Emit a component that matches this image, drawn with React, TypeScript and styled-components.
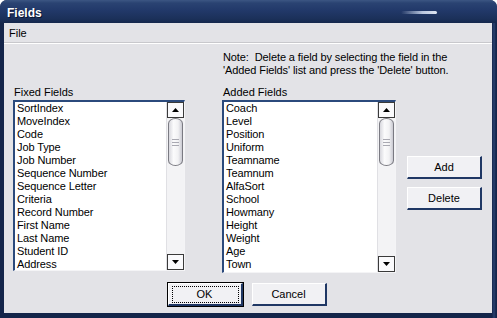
import React from 'react'
import styled, { createGlobalStyle } from 'styled-components'

const GlobalStyle = createGlobalStyle`
    html, body {
        margin: 0;
        padding: 0;
        background: #ffffff;
    }
    body {
        font-family: "Liberation Sans", Arial, sans-serif;
        font-size: 11px;
        color: #000000;
    }
`

const fixedFields = [
    'SortIndex', 'MoveIndex', 'Code', 'Job Type', 'Job Number', 'Sequence Number',
    'Sequence Letter', 'Criteria', 'Record Number', 'First Name', 'Last Name',
    'Student ID', 'Address',
]

const addedFields = [
    'Coach', 'Level', 'Position', 'Uniform', 'Teamname', 'Teamnum', 'AlfaSort',
    'School', 'Howmany', 'Height', 'Weight', 'Age', 'Town',
]

const Window = styled.div`
    width: 497px;
    height: 318px;
    display: flex;
    flex-direction: column;
    background: linear-gradient(90deg, #14254a 0, #14254a 492px, #2a4170 494px, #14254a 496px);
    border-radius: 7px 7px 0 0;
    overflow: hidden;
    box-sizing: border-box;
`

const TitleBar = styled.div`
    position: relative;
    height: 23px;
    flex: none;
    display: flex;
    align-items: center;
    padding: 2px 0 0 7px;
    box-sizing: border-box;
    background: linear-gradient(#3c5683 0px, #2a4372 3px, #22396a 10px, #1b3059 19px, #15274c 23px);
    color: #ffffff;
    font-weight: bold;
    font-size: 12px;
    text-shadow: 1px 1px 0 #0a1530;
`

const Gloss = styled.div`
    position: absolute;
    right: 60px;
    top: 11px;
    width: 36px;
    height: 3px;
    border-radius: 2px;
    background: linear-gradient(90deg, rgba(140, 160, 200, 0) 0%, #b9c6de 60%, #dfe6f2 100%);
`

const Body = styled.div`
    flex: 1;
    margin: 0 5px 5px 4px;
    background: #e3e3e7;
    display: flex;
    flex-direction: column;
`

const MenuBar = styled.div`
    height: 19px;
    flex: none;
    display: flex;
    align-items: center;
    padding-left: 5px;
    border-bottom: 1px solid #c8c8cc;
    box-shadow: 0 1px 0 #ffffff;
`

const Content = styled.div`
    display: grid;
    grid-template-columns: 172px 37px 174px 11px 75px;
    grid-template-rows: auto auto auto;
    padding: 8px 0 0 9px;
`

const Note = styled.div`
    grid-column: 3 / 6;
    grid-row: 1;
    margin-left: 1px;
    line-height: 13px;
    height: 35px;
    white-space: nowrap;
    letter-spacing: -0.1px;
`

const Label = styled.div<{ $col: number }>`
    grid-column: ${p => p.$col};
    grid-row: 2;
    margin-left: 1px;
    line-height: 13px;
    height: 14px;
`

const ListBox = styled.div<{ $col: number; $height: number }>`
    grid-column: ${p => p.$col};
    grid-row: 3;
    align-self: start;
    height: ${p => p.$height}px;
    display: flex;
    background: #ffffff;
    border-top: 2px solid #2b4a7c;
    border-left: 2px solid #2b4a7c;
    border-right: 1px solid #f4f4f6;
    border-bottom: 1px solid #f4f4f6;
    box-sizing: border-box;
    overflow: hidden;
`

const Items = styled.div`
    flex: 1;
    padding-left: 2px;
`

const Item = styled.div`
    height: 13px;
    line-height: 13px;
    white-space: nowrap;
    letter-spacing: -0.1px;
`

const ScrollBar = styled.div`
    width: 17px;
    flex: none;
    display: flex;
    flex-direction: column;
    background: #f3f3f5;
    border-left: 1px solid #e0e0e4;
`

const ArrowButton = styled.div`
    height: 16px;
    flex: none;
    display: flex;
    align-items: center;
    justify-content: center;
    background: #fafafc;
    border: 1px solid #3a3a3a;
    box-sizing: border-box;
`

const Thumb = styled.div`
    height: 46px;
    flex: none;
    margin: 0 1px;
    border: 1px solid #7a7a82;
    border-radius: 8px 8px 8px 8px / 6px 6px 6px 6px;
    background: linear-gradient(90deg, #d8d8de 0%, #fbfbfc 35%, #f2f2f4 70%, #cacad2 100%);
    display: flex;
    flex-direction: column;
    align-items: center;
    justify-content: center;
    gap: 2px;
`

const Grip = styled.div`
    width: 7px;
    height: 1px;
    background: #a9a9b2;
`

const Track = styled.div`
    flex: 1;
`

const ButtonColumn = styled.div`
    grid-column: 5;
    grid-row: 3;
    padding-top: 56px;
    display: flex;
    flex-direction: column;
    gap: 8px;
`

const Button = styled.div<{ $focused?: boolean }>`
    width: 75px;
    height: 23px;
    box-sizing: border-box;
    display: flex;
    align-items: center;
    justify-content: center;
    background: #f1f1f4;
    border-top: 1px solid #ffffff;
    border-left: 1px solid #ffffff;
    border-right: 2px solid #1f3764;
    border-bottom: 2px solid #1f3764;
    outline: ${p => (p.$focused ? '1px solid #000000' : 'none')};
    outline-offset: 0;
    position: relative;
`

const FocusRect = styled.div`
    position: absolute;
    inset: 2px 2px 1px 3px;
    border: 1px dotted #000000;
`

const Footer = styled.div`
    display: flex;
    justify-content: center;
    gap: 9px;
    padding: 10px 2px 0 0;
`

const Arrow = ({ up }: { up?: boolean }) => (
    <svg width="7" height="4" viewBox="0 0 7 4">
        <path d={up ? 'M3.5 0 L7 4 L0 4 Z' : 'M0 0 L7 0 L3.5 4 Z'} fill="#000" />
    </svg>
)

const List = ({ items, col, height }: { items: string[]; col: number; height: number }) => (
    <ListBox $col={col} $height={height}>
        <Items>
            {items.map(item => <Item key={item}>{item}</Item>)}
        </Items>
        <ScrollBar>
            <ArrowButton><Arrow up /></ArrowButton>
            <Thumb>
                <Grip /><Grip /><Grip />
            </Thumb>
            <Track />
            <ArrowButton><Arrow /></ArrowButton>
        </ScrollBar>
    </ListBox>
)

export default function App() {
    return (
        <>
            <GlobalStyle />
            <Window>
                <TitleBar>
                    Fields
                    <Gloss />
                </TitleBar>
                <Body>
                    <MenuBar>File</MenuBar>
                    <Content>
                        <Note>
                            Note:&nbsp; Delete a field by selecting the field in the<br />
                            'Added Fields' list and press the 'Delete' button.
                        </Note>
                        <Label $col={1}>Fixed Fields</Label>
                        <Label $col={3}>Added Fields</Label>
                        <List items={fixedFields} col={1} height={171} />
                        <List items={addedFields} col={3} height={173} />
                        <ButtonColumn>
                            <Button>Add</Button>
                            <Button>Delete</Button>
                        </ButtonColumn>
                    </Content>
                    <Footer>
                        <Button $focused>OK<FocusRect /></Button>
                        <Button>Cancel</Button>
                    </Footer>
                </Body>
            </Window>
        </>
    )
}
